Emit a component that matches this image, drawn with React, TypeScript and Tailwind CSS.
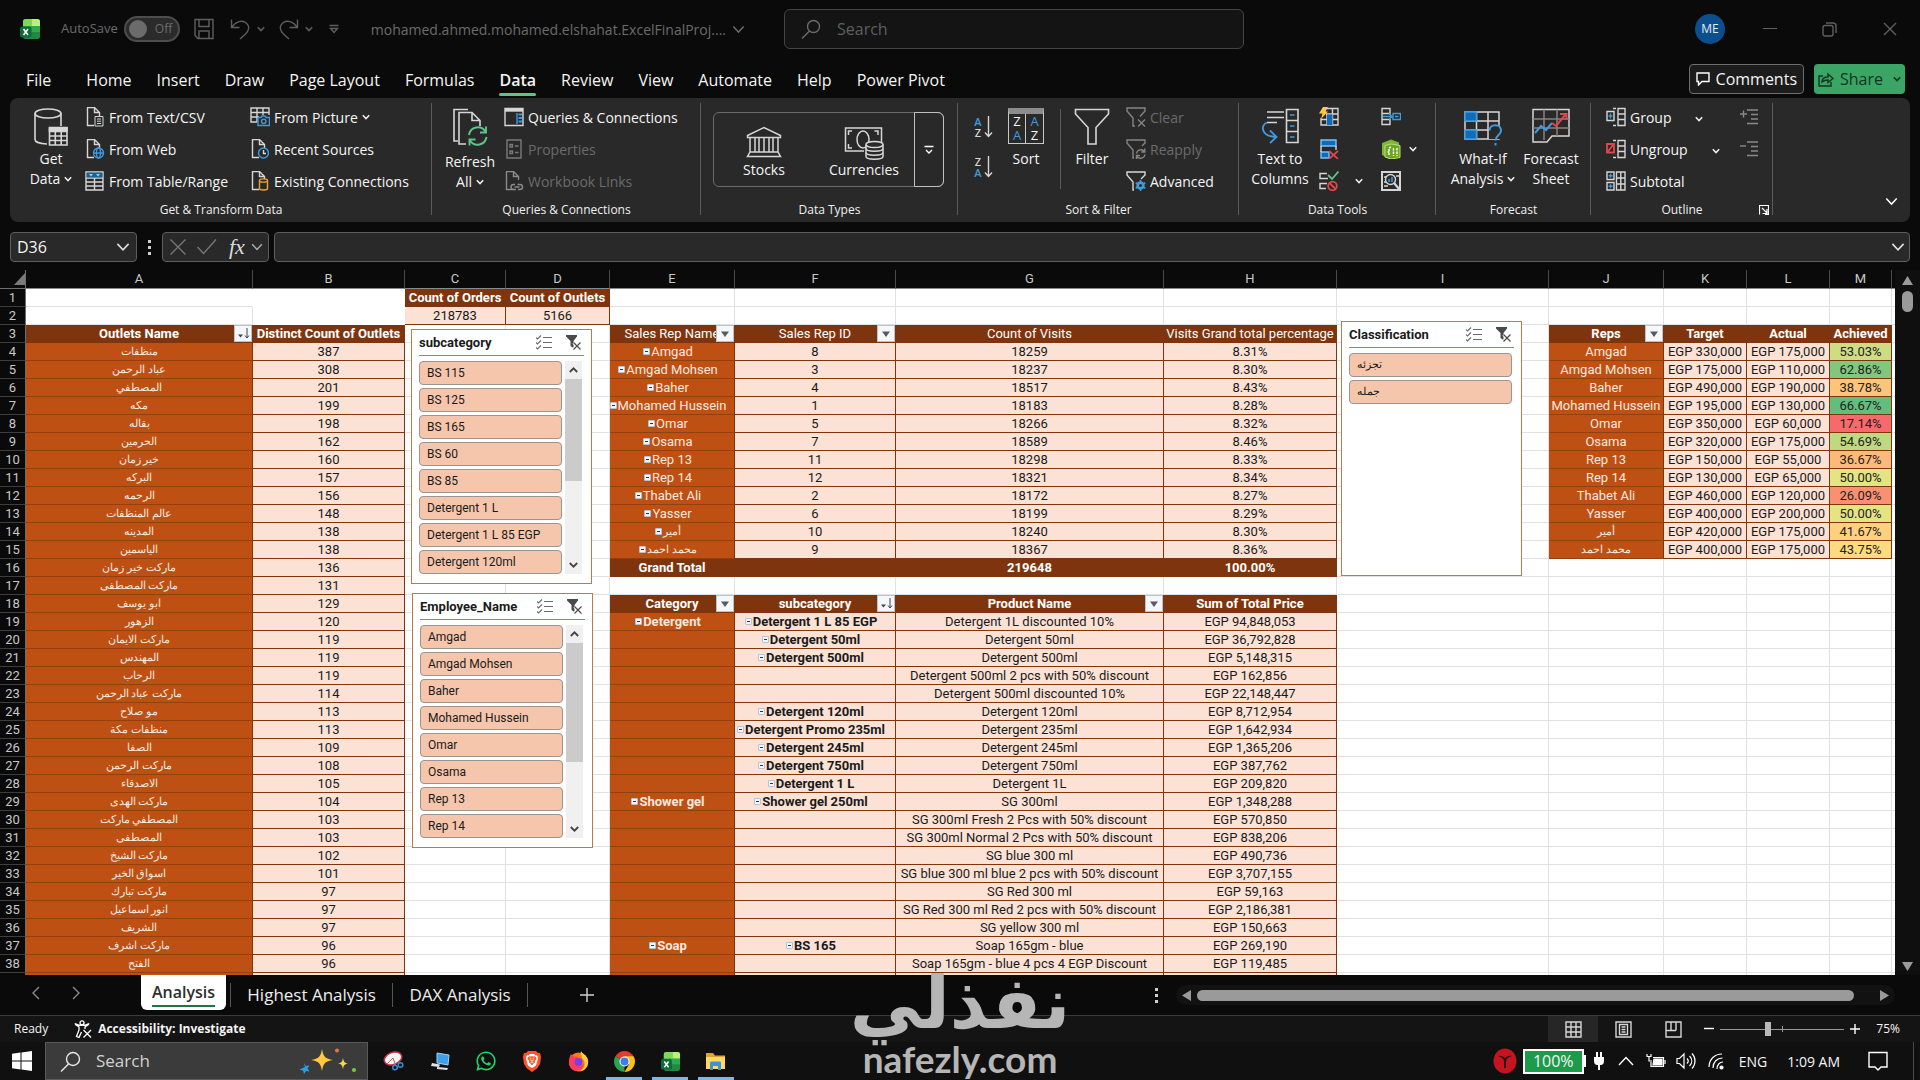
import { useState } from "react";
import type { ReactNode } from "react";
import { FaWhatsapp } from "react-icons/fa";
import { SiBrave } from "react-icons/si";

const LIGHT = "#d6d6d6";
const BLUE = "#3f9bdc";
const GREEN = "#5fc48a";

type IconProps = { w?: number; h?: number; box?: string; children: ReactNode; sw?: number; color?: string };

function Icon({ w = 20, h = 20, box, children, sw = 1.4, color = LIGHT }: IconProps) {
  return (
    <svg width={w} height={h} viewBox={box ?? `0 0 ${w} ${h}`} fill="none" stroke={color} strokeWidth={sw} className="shrink-0" aria-hidden="true">
      {children}
    </svg>
  );
}

function Caret({ size = 8, color = "#f0f0f0" }: { size?: number; color?: string }) {
  return (
    <svg width={size} height={size} viewBox="0 0 8 8" fill="none" stroke={color} strokeWidth={size > 8 ? 0.9 : 1.5} className="inline-block shrink-0" aria-hidden="true">
      <path d="M0.8 2.2 4 5.6 7.2 2.2" />
    </svg>
  );
}

/* ---------- Ribbon icons ---------- */

const docOutline = (color = LIGHT) => <path d="M9 18.5H2.5v-18h7l5 5V9M9.5.5v5h5" stroke={color} />;

const icons = {
  getData: (
    <Icon w={34} h={38} sw={1.6}>
      <ellipse cx="14" cy="5.5" rx="13" ry="4.5" />
      <path d="M1 5.5v26c0 2.400 5 4.200 12 4.500M27 5.500V18" />
      <path d="M15.500 19.500h17.500v17.500H15.500zM15.500 23.500H33M15.500 28H33M15.500 32.500H33M21.300 19.500V37M27.200 19.500V37" fill="#292929" />
      <path d="M15.500 20h17.500v3H15.500z" fill={LIGHT} />
    </Icon>
  ),
  textCsv: (
    <Icon>
      {docOutline()}
      <path d="M10 9.500h8v9.500h-8zM12 12h4M12 14.200h4M12 16.500h4" fill="#292929" strokeWidth={1} />
    </Icon>
  ),
  web: (
    <Icon>
      {docOutline()}
      <g stroke={BLUE}>
        <circle cx="13.500" cy="14" r="5" fill="#292929" />
        <ellipse cx="13.500" cy="14" rx="2" ry="5" />
        <path d="M8.500 14h10" />
      </g>
    </Icon>
  ),
  table: (
    <Icon>
      <path d="M1 1h17v18H1zM1 7h17M1 11h17M1 15h17M9.500 7v12" />
      <path d="M1.600 1.600h15.800v4.800H1.600z" fill="#1b5f93" stroke="none" />
      <path d="M4 3h4L6 5.500zM11 3h4l-2 2.500z" fill="#8fd0ff" stroke="none" />
    </Icon>
  ),
  picture: (
    <Icon>
      <path d="M7 15H1V1h18v7M1 5.500h18M1 10h8M7 1v14M13 1v7" />
      <path d="M8 10.500h3l1-1.500h3l1 1.500h3.500v8H8z" fill="#292929" stroke={BLUE} />
      <circle cx="13.700" cy="14.300" r="2.200" stroke={BLUE} />
    </Icon>
  ),
  recent: (
    <Icon>
      {docOutline()}
      <circle cx="13.500" cy="14" r="5" fill="#292929" stroke={BLUE} />
      <path d="M13.500 11v3.500H16" />
    </Icon>
  ),
  existing: (
    <Icon>
      {docOutline()}
      <g stroke="#e8a33d">
        <path d="M9.500 9.500v8c0 2 8 2 8 0v-8" fill="#292929" />
        <ellipse cx="13.500" cy="9.500" rx="4" ry="1.600" fill="#292929" />
      </g>
    </Icon>
  ),
  refresh: (
    <Icon w={36} h={38} sw={1.600}>
      <path d="M6 33H2V1.500h14M14 36H7V4.500h13l8 8V18M20 4.500v8h8" />
      <g stroke={GREEN} strokeWidth="1.900">
        <path d="M17 27a9 9 0 0 1 16.500-3.500M34 18.500v6h-6M34.500 29a9 9 0 0 1-16.500 3.500M17.500 37.500v-6h6" />
      </g>
    </Icon>
  ),
  queries: (
    <Icon>
      <path d="M1 1.500h18v17H1z" />
      <path d="M1 3.200h18" strokeWidth="3" />
      <path d="M13 6v11" stroke={BLUE} />
      <path d="M14.500 7.500h3.500M14.500 11h3.500M14.500 14.500h3.500" stroke={BLUE} strokeWidth="2" />
    </Icon>
  ),
  properties: (
    <Icon color="#7a7a7a">
      <path d="M3 1h14v18H3z" />
      <path d="M6 5.500h2.500V8H6zM6 12h2.500v2.500H6zM11 7h3.500M11 13.500h3.500" />
    </Icon>
  ),
  links: (
    <Icon color="#8a8a8a">
      {docOutline("#8a8a8a")}
      <path d="M11 13.500H9.500a2.500 2.500 0 0 0 0 5H12M14 18.500h2a2.500 2.500 0 0 0 0-5h-2.500M10.500 16h5" />
    </Icon>
  ),
  stocks: (
    <Icon w={36} h={32} sw={1.500}>
      <path d="M1.500 9.500 18 1.500l16.500 8v2h-33zM4 11.500V26M9 11.500V26M13 11.500V26M18 11.500V26M23 11.500V26M27 11.500V26M32 11.500V26M4 26h28l2.500 4.500h-33z" />
    </Icon>
  ),
  currencies: (
    <Icon w={40} h={34} sw={1.500}>
      <path d="M20 25H1.500V2h36v14" />
      <path d="M8 5H4.500v4M4.500 18v4H8M30.500 5H34v4" />
      <ellipse cx="19" cy="13.500" rx="6" ry="8.500" />
      <path d="M22 18.500v12c0 3.500 17 3.500 17 0v-12" fill="#292929" />
      <ellipse cx="30.500" cy="18.500" rx="8.500" ry="3" fill="#292929" />
      <path d="M22 22.500c0 3.500 17 3.500 17 0M22 26.500c0 3.500 17 3.500 17 0" />
    </Icon>
  ),
  filterBig: (
    <Icon w={36} h={38} sw={1.600}>
      <path d="M1.500 1.500h33V6L22 19.500V36h-8V19.500L1.500 6z" />
    </Icon>
  ),
  clear: (
    <Icon color="#858585">
      <path d="M9 19H7v-8L1 4V1h18v3l-5 5.500M12 12.500l7 7M19 12.500l-7 7" />
    </Icon>
  ),
  reapply: (
    <Icon color="#858585">
      <path d="M8 19H7v-8L1 4V1h18v3l-3 3M10.500 14.500a4.500 4.500 0 0 1 8-2M18.800 9.500v3.500h-3.500M19 15.500a4.500 4.500 0 0 1-8 2M10.500 20v-3.500H14" />
    </Icon>
  ),
  advanced: (
    <Icon>
      <path d="M8 19H7v-8L1 4V1h18v3l-4 4" />
      <circle cx="14.500" cy="14.500" r="3" stroke={BLUE} strokeWidth="2.400" />
      <path d="M14.500 9v11M9.700 11.700l9.600 5.600M19.300 11.700l-9.600 5.600" stroke={BLUE} strokeWidth="1.600" />
      <circle cx="14.500" cy="14.500" r="1.500" fill="#292929" stroke="none" />
    </Icon>
  ),
  textCols: (
    <Icon w={40} h={36} sw={1.600}>
      <path d="M7 4h17M7 9.500h17M7 14.500h10M26.500 1.500H38v33H26.500zM26.500 12.500H38M26.500 23.500H38" />
      <path d="M7 14.500c-6 2-7 13 8 14.500M10 22.500l6.500 6.500-6.500 6" stroke={BLUE} strokeWidth="1.800" />
      <path d="M30 7h4.500M30 18h4.500M30 29h4.500" stroke={BLUE} />
    </Icon>
  ),
  flash: (
    <Icon>
      <path d="M6 1.500h13V18H2v-7M7 7h12M2 12.500h17M8 7v11M13.500 1.500V18" />
      <path d="M8 7.500h5.500V18H8z" fill="#0f6cbd" stroke="none" />
      <path d="M4 0h5L6.500 4.500H9L2 12l1.500-5.500H0z" fill="#ffc83d" stroke="none" />
    </Icon>
  ),
  dupes: (
    <Icon>
      <path d="M2 1h15v6H2zM2 13h8v6H2z" fill="#0f6cbd" stroke="#7cc0f0" />
      <path d="M2 7v6M17 7v4" />
      <path d="m10 12 9 8M19 12l-9 8" stroke="#e0474c" strokeWidth="1.700" />
    </Icon>
  ),
  validation: (
    <Icon>
      <path d="M8 2.500H1v5h8M8 12.500H1v5h6" />
      <path d="m9 4 4 4 6.500-7.500" stroke={GREEN} strokeWidth="1.800" />
      <circle cx="13.500" cy="15" r="4.300" stroke="#e0474c" strokeWidth="1.800" />
      <path d="m10.500 12 6 6" stroke="#e0474c" strokeWidth="1.800" />
    </Icon>
  ),
  consolidate: (
    <Icon>
      <path d="M1 1.500h8v5H1zM1 12.500h8v5H1zM1 6.500v6" />
      <path d="M12 6.500h7.500v6H12zM2 9.500h8M8 6.500l3 3-3 3M14 9.500h3.500" stroke={BLUE} />
    </Icon>
  ),
  dataModel: (
    <Icon>
      <path d="M1 4 10 .5l8 3v14l-8 2.500-9-4z" fill="#7db72f" stroke="none" />
      <path d="M4 6.500 10 5l9 1.500v12L10 20l-6-2z" fill="#6ba525" stroke="#b9e07c" strokeWidth="1" />
      <path d="M8 16V9l2-1M12.500 9v8M16 9v8M6.500 13H8" stroke="#fff" strokeDasharray="2.500 1" />
    </Icon>
  ),
  manage: (
    <Icon>
      <path d="M1 1h18v18H1z" strokeWidth="2" />
      <path d="M3 6h3M3 11h2M3 15h4M15 5h3" />
      <circle cx="9.500" cy="8.500" r="5" fill="#292929" />
      <path d="m13 12 6 7" strokeWidth="2.200" />
      <path d="M8 11V8M11 11V6" stroke={BLUE} strokeWidth="1.600" />
    </Icon>
  ),
  whatIf: (
    <Icon w={38} h={38} sw={1.500}>
      <path d="M1 4h34v27H1zM1 13h34M1 22h34M12.500 4v27M24 4v27" />
      <path d="M1 4h11.500v9H1zM1 22h11.500v9H1z" fill="#0f6cbd" stroke="#3f9bdc" />
      <path d="M25 19h12v12H25z" fill="#292929" stroke="none" />
      <path d="M25.500 22.500c0-7 11.500-7 11.500 0 0 5-5.500 4.500-5.500 10M31.500 35v2.500" stroke={BLUE} strokeWidth="2" />
    </Icon>
  ),
  forecast: (
    <Icon w={38} h={36} sw={1.500}>
      <path d="M1 1.500h36V28H20l-5 6H1z" />
      <path d="M1 11h36M1 20h36M12 1.500V32M25 1.500V28" stroke="#8f8080" />
      <path d="m3 25 6-7 5 4 6-7" stroke={BLUE} strokeWidth="2" />
      <path d="m20 15 4 3L34 6M28 6h6.500v6" stroke="#e0474c" strokeWidth="2" />
    </Icon>
  ),
  group: (
    <Icon>
      <path d="M12 1.500h7v17h-7zM12 7h7M12 12.500h7M10 1.500H7M10 18.500H7" />
      <path d="M1 4.500h7v9H1z" />
      <path d="M4.500 6.500v5M2.500 9h4" stroke={BLUE} />
    </Icon>
  ),
  ungroup: (
    <Icon>
      <path d="M12 1.500h7v17h-7zM12 7h7M12 12.500h7M10 1.500H7M10 18.500H7" />
      <path d="M1 5h7v8.500H1zM1.500 13 7.500 5.500" stroke="#e0474c" strokeWidth="1.800" />
    </Icon>
  ),
  subtotal: (
    <Icon>
      <path d="M10.500 1h8.500v18h-8.500zM10.500 7H19M10.500 13H19M14.800 1v18M1 1h7v7.500H1zM1 11.500h7V19H1z" />
      <path d="M4.500 2.800v4M2.600 4.800h4M4.500 13.300v4M2.600 15.300h4" stroke={BLUE} />
    </Icon>
  ),
};

function SortIcon({ first, second, topBlue }: { first: string; second: string; topBlue: boolean }) {
  return (
    <span className="flex h-6 w-5 items-center gap-px">
      <span className="flex w-2.5 flex-col text-[11px] leading-[11px] font-semibold">
        <span className={topBlue ? "text-[#3f9bdc]" : "text-[#d6d6d6]"}>{first}</span>
        <span className={topBlue ? "text-[#d6d6d6]" : "text-[#3f9bdc]"}>{second}</span>
      </span>
      <Icon w={9} h={22}>
        <path d="M4.500 0v20M1 16.500l3.500 4 3.500-4" />
      </Icon>
    </span>
  );
}

function SortBig() {
  return (
    <span className="grid h-9 w-9 grid-cols-2 border border-[#c8c8c8] border-t-[6px] border-t-[#8c8c8c] text-[13px] leading-[14px]">
      <span className="flex flex-col items-center border-r border-[#c8c8c8]">
        <span>Z</span>
        <span className="text-[#3f9bdc]">A</span>
      </span>
      <span className="flex flex-col items-center">
        <span className="text-[#3f9bdc]">A</span>
        <span>Z</span>
      </span>
    </span>
  );
}

function LevelIcon({ plus }: { plus: boolean }) {
  return (
    <Icon w={20} h={18} color="#8a8a8a">
      <path d={plus ? "M1 6h7M4.500 2.500v7" : "M1 6h6"} />
      <path d="M8 2h11M12 6.500h7M12 11h7M8 15.500h11" />
    </Icon>
  );
}

/* ---------- Ribbon ---------- */

function RibbonGroup({ label, width, children }: { label: string; width: string; children: ReactNode }) {
  return (
    <section aria-label={label} className={`relative flex shrink-0 flex-col pt-[3px] ${width}`}>
      <div className="flex h-[98px]">{children}</div>
      <div className="flex h-[22px] items-center justify-center text-[12px] text-[#f0f0f0]">{label}</div>
      <span className="absolute top-[5px] right-0 bottom-[7px] w-px bg-[#5a5a5a]" />
    </section>
  );
}

function BigButton({ icon, lines, caret, width, gap = "gap-[3px]" }: { icon: ReactNode; lines: string[]; caret?: boolean; width: string; gap?: string }) {
  return (
    <button className={`flex shrink-0 flex-col items-center pt-[7px] ${width} ${gap}`}>
      <span className="flex h-[38px] items-start">{icon}</span>
      <span className="text-[14px] leading-5 whitespace-nowrap">
        {lines.map((line, i) => (
          <span key={line} className="block">
            {line}
            {caret && i === lines.length - 1 && (
              <span className="ml-1 inline-flex pb-0.5 align-middle">
                <Caret />
              </span>
            )}
          </span>
        ))}
      </span>
    </button>
  );
}

function RowButton({ icon, label, disabled, caret }: { icon: ReactNode; label: string; disabled?: boolean; caret?: boolean }) {
  return (
    <button disabled={disabled} className={`flex h-8 items-center gap-1 text-[14px] whitespace-nowrap ${disabled ? "text-[#6b6b6b]" : ""}`}>
      {icon}
      {label}
      {caret && <Caret />}
    </button>
  );
}

function IconButton({ icon, label, caret, gap = "gap-2" }: { icon: ReactNode; label: string; caret?: boolean; gap?: string }) {
  return (
    <button aria-label={label} className={`flex h-8 items-center ${gap}`}>
      {icon}
      {caret && <Caret />}
    </button>
  );
}

function Ribbon() {
  return (
    <div className="mx-2.5 flex h-[124px] rounded-lg bg-[#292929]">
      <RibbonGroup label="Get & Transform Data" width="w-[422px]">
        <BigButton icon={icons.getData} lines={["Get", "Data"]} caret width="w-[62px] ml-[10px]" />
        <div className="ml-[3px] w-[165px]">
          <RowButton icon={icons.textCsv} label="From Text/CSV" />
          <RowButton icon={icons.web} label="From Web" />
          <RowButton icon={icons.table} label="From Table/Range" />
        </div>
        <div>
          <RowButton icon={icons.picture} label="From Picture" caret />
          <RowButton icon={icons.recent} label="Recent Sources" />
          <RowButton icon={icons.existing} label="Existing Connections" />
        </div>
      </RibbonGroup>
      <RibbonGroup label="Queries & Connections" width="w-[269px]">
        <BigButton icon={icons.refresh} lines={["Refresh", "All"]} caret width="w-[62px] ml-[7px]" gap="gap-1.5" />
        <div className="ml-[3px]">
          <RowButton icon={icons.queries} label="Queries & Connections" />
          <RowButton icon={icons.properties} label="Properties" disabled />
          <RowButton icon={icons.links} label="Workbook Links" disabled />
        </div>
      </RibbonGroup>
      <RibbonGroup label="Data Types" width="w-[257px]">
        <div className="mt-[11px] ml-3 flex h-[75px] w-[231px] rounded-md border border-[#6a6a6a] text-[14px] leading-5">
          <button className="flex w-[100px] flex-col items-center justify-end pb-1.5">
            {icons.stocks}
            <span className="mt-0.5">Stocks</span>
          </button>
          <button className="flex w-[100px] flex-col items-center justify-end pb-1.5">
            {icons.currencies}
            Currencies
          </button>
          <button aria-label="More data types" className="-my-px -mr-px flex flex-1 items-center justify-center rounded-r-md border border-[#c0c0c0]">
            <Icon w={10} h={10} color="#fff">
              <path d="M.5 1.500h9M2 5l3 3 3-3" />
            </Icon>
          </button>
        </div>
      </RibbonGroup>
      <RibbonGroup label="Sort & Filter" width="w-[281px]">
        <div className="ml-[15px] flex w-5 flex-col gap-4 pt-3.5">
          <button aria-label="Sort A to Z">
            <SortIcon first="A" second="Z" topBlue />
          </button>
          <button aria-label="Sort Z to A">
            <SortIcon first="Z" second="A" topBlue={false} />
          </button>
        </div>
        <BigButton icon={<SortBig />} lines={["Sort"]} width="w-12 ml-[9px]" />
        <span className="mt-2 ml-2.5 h-20 w-px bg-[#5a5a5a]" />
        <BigButton icon={icons.filterBig} lines={["Filter"]} width="w-12 ml-[7px]" />
        <div className="ml-2.5">
          <RowButton icon={icons.clear} label="Clear" disabled />
          <RowButton icon={icons.reapply} label="Reapply" disabled />
          <RowButton icon={icons.advanced} label="Advanced" />
        </div>
      </RibbonGroup>
      <RibbonGroup label="Data Tools" width="w-[197px]">
        <BigButton icon={icons.textCols} lines={["Text to", "Columns"]} width="w-[70px] ml-1.5" />
        <div className="ml-1 w-[62px]">
          <IconButton icon={icons.flash} label="Flash Fill" />
          <IconButton icon={icons.dupes} label="Remove Duplicates" />
          <IconButton icon={icons.validation} label="Data Validation" caret gap="gap-4" />
        </div>
        <div>
          <IconButton icon={icons.consolidate} label="Consolidate" />
          <IconButton icon={icons.dataModel} label="Data Model" caret />
          <IconButton icon={icons.manage} label="Manage Data Model" />
        </div>
      </RibbonGroup>
      <RibbonGroup label="Forecast" width="w-[155px]">
        <BigButton icon={icons.whatIf} lines={["What-If", "Analysis"]} caret width="w-[74px] ml-2.5" />
        <BigButton icon={icons.forecast} lines={["Forecast", "Sheet"]} width="w-[62px]" />
      </RibbonGroup>
      <RibbonGroup label="Outline" width="w-[182px]">
        <div className="ml-[15px] flex-1">
          <div className="flex">
            <RowButton icon={icons.group} label="Group" />
            <button aria-label="Group options" className="ml-6">
              <Caret />
            </button>
          </div>
          <div className="flex">
            <RowButton icon={icons.ungroup} label="Ungroup" />
            <button aria-label="Ungroup options" className="ml-6">
              <Caret />
            </button>
          </div>
          <RowButton icon={icons.subtotal} label="Subtotal" />
        </div>
        <div className="mr-3.5">
          <IconButton icon={<LevelIcon plus />} label="Show Detail" />
          <IconButton icon={<LevelIcon plus={false} />} label="Hide Detail" />
        </div>
        <button aria-label="Outline settings" className="absolute right-1 bottom-[7px]">
          <Icon w={10} h={10} color="#fff" sw={1.200}>
            <path d="M.5 9.500V.500h9v9H6M3 3l5 5M8 4v4.500H3.500" />
          </Icon>
        </button>
      </RibbonGroup>
      <div className="flex flex-1 items-end justify-end pr-3 pb-2.5">
        <button aria-label="Collapse ribbon">
          <Caret size={13} color="#fff" />
        </button>
      </div>
    </div>
  );
}

/* ---------- Title bar ---------- */

function ExcelLogo({ size = 22 }: { size?: number }) {
  return (
    <svg width={size} height={size} viewBox="0 0 22 22" aria-hidden="true">
      <rect x="4" y="1" width="17" height="20" rx="2.500" fill="#1d8a44" />
      <path d="M6.500 1H13v7H4V3.500A2.500 2.500 0 0 1 6.500 1z" fill="#7fd957" />
      <path d="M13 1h5.500A2.500 2.500 0 0 1 21 3.500V8h-8z" fill="#b8f07c" />
      <path d="M4 8h17v6H4z" fill="#2fa84f" />
      <rect x="1" y="8.500" width="11.500" height="11" rx="2" fill="#0f6b3a" />
      <path d="m4.500 11 4.500 6M9 11l-4.500 6" stroke="#fff" strokeWidth="1.600" />
    </svg>
  );
}

function TitleBar() {
  const dim = "#5f5f5f";
  return (
    <header className="flex h-[58px] items-center pl-[19px] text-[#6b6b6b]">
      <ExcelLogo />
      <label className="ml-5 flex items-center gap-1.5 text-[13px]">
        AutoSave
        <input type="checkbox" role="switch" className="peer sr-only" />
        <span className="flex h-[26px] w-14 items-center gap-2 rounded-full border-2 border-[#4d4d4d] bg-[#2b2b2b] pl-[3px] text-[12px]">
          <span className="size-[18px] rounded-full bg-[#6b6b6b]" />
          Off
        </span>
      </label>
      <button aria-label="Save" className="ml-3.5">
        <Icon w={20} h={22} color={dim}>
          <path d="M1 1.500h18v19H4l-3-3zM5 1.500v7h10v-7M5 20.500V13h10v7.500" />
        </Icon>
      </button>
      <button aria-label="Undo" className="ml-4 flex items-center gap-1.5">
        <Icon w={21} h={22} color={dim}>
          <path d="M1.500 1.500v8h8M1.500 9.500C6 3 12 2 15.500 4.500c5 3.500 3.500 8.500-.5 12L10 21" />
        </Icon>
        <Caret color={dim} />
      </button>
      <button aria-label="Redo" className="ml-3.5 flex items-center gap-1.5">
        <Icon w={20} h={22} color={dim}>
          <path d="M18.500 1.500v8h-8M18.500 9.500C14 3 8 2 4.500 4.500c-5 3.500-3.500 8.500.5 12L10 21" />
        </Icon>
        <Caret color={dim} />
      </button>
      <button aria-label="Customize toolbar" className="ml-4">
        <Icon w={10} h={10} color={dim}>
          <path d="M.5 1.500h9M1.500 4.500h7L5 8.500z" />
        </Icon>
      </button>
      <button className="ml-8 flex items-center gap-1.5 text-[14px]">
        mohamed.ahmed.mohamed.elshahat.ExcelFinalProj....
        <Caret size={13} color="#6b6b6b" />
      </button>
      <label className="ml-[39px] flex h-10 w-[460px] items-center rounded-md border border-[#444] bg-[#141414] pl-4">
        <Icon w={20} h={20} color="#6b6b6b">
          <circle cx="12.500" cy="7.500" r="6" />
          <path d="M8.500 12 1 19.500" />
        </Icon>
        <input type="search" aria-label="Search" placeholder="Search" className="ml-4 min-w-0 flex-1 bg-transparent text-[16px] outline-none placeholder:text-[#5f5f5f]" />
      </label>
      <div className="ml-auto flex items-center">
        <button className="flex size-[30px] items-center justify-center rounded-full bg-[#0b4f8f] text-[12px] text-[#e8e8e8]">ME</button>
        <button aria-label="Minimize" className="ml-[38px]">
          <Icon w={14} h={14} color={dim} sw={1}>
            <path d="M0 6.500h14" />
          </Icon>
        </button>
        <button aria-label="Restore" className="ml-[45px]">
          <Icon w={16} h={15} color={dim}>
            <rect x="1" y="3.500" width="10" height="10.500" rx="2" />
            <path d="M4 1h7c2 0 3 1 3 3v7" />
          </Icon>
        </button>
        <button aria-label="Close" className="mr-[23px] ml-[45px]">
          <Icon w={14} h={14} color={dim}>
            <path d="m1 1 12 12M13 1 1 13" />
          </Icon>
        </button>
      </div>
    </header>
  );
}

const menuTabs = ["File", "Home", "Insert", "Draw", "Page Layout", "Formulas", "Data", "Review", "View", "Automate", "Help", "Power Pivot"];

function MenuBar() {
  return (
    <nav className="flex h-10 items-center gap-px pr-[15px] pl-3.5 text-[16px]">
      {menuTabs.map((tab) => (
        <button key={tab} className={`relative px-3 pt-1 whitespace-nowrap ${tab === "File" ? "mr-2.5" : ""} ${tab === "Data" ? "font-semibold" : ""}`}>
          {tab}
          {tab === "Data" && <span className="absolute inset-x-3 -bottom-1 h-[3px] rounded bg-[#5fc48a]" />}
        </button>
      ))}
      <div className="ml-auto flex gap-2.5 pt-0.5">
        <button className="flex h-[30px] items-center gap-1.5 rounded border border-[#6e6e6e] bg-[#1c1c1c] px-1.5 text-[16px]">
          <Icon w={14} h={14} color="#fff">
            <path d="M1 1h12v8.500H6l-3.500 3.500V9.500H1z" />
          </Icon>
          Comments
        </button>
        <button className="flex h-[30px] items-center gap-1.5 rounded bg-[#3aa564] px-1 text-[16px] text-[#10351f]">
          <Icon w={16} h={15} color="#10351f">
            <path d="M5 4H1v10h12v-4M4 10c0-4 3-5 6-5V2l5 4.500-5 4V8C7 8 5.500 8.500 4 10z" />
          </Icon>
          Share
          <span className="ml-1 flex">
            <Caret color="#10351f" />
          </span>
        </button>
      </div>
    </nav>
  );
}

function FormulaBar() {
  return (
    <div className="flex h-12 items-start px-2.5 pt-2.5">
      <div className="flex h-[30px] w-[127px] items-center rounded border border-[#5c5c5c] bg-[#292929] pr-1.5 pl-1.5">
        <input aria-label="Name box" defaultValue="D36" className="min-w-0 flex-1 bg-transparent text-[16px] outline-none" />
        <Caret size={14} color="#e0e0e0" />
      </div>
      <span className="mx-[11px] flex h-[30px] w-[3px] flex-col justify-center gap-[3px]">
        <span className="size-[3px] bg-[#d0d0d0]" />
        <span className="size-[3px] bg-[#d0d0d0]" />
        <span className="size-[3px] bg-[#d0d0d0]" />
      </span>
      <div className="flex h-[30px] w-[107px] items-center rounded border border-[#5c5c5c] bg-[#292929] pl-1.5">
        <button aria-label="Cancel">
          <Icon w={18} h={18} color="#777">
            <path d="m1.500 1.500 15 15M16.500 1.500l-15 15" />
          </Icon>
        </button>
        <button aria-label="Enter" className="ml-2.5">
          <Icon w={20} h={18} color="#777">
            <path d="m.500 9 6 6.500L19 1.500" />
          </Icon>
        </button>
        <button className="ml-3 font-['Liberation_Serif',serif] text-[22px] leading-6 text-[#dcdcdc] italic">fx</button>
        <span className="ml-1.5 flex">
          <Caret size={12} color="#b0b0b0" />
        </span>
      </div>
      <div className="ml-[5px] flex h-[30px] flex-1 items-center rounded border border-[#5c5c5c] bg-[#292929] pr-1">
        <input aria-label="Formula" className="min-w-0 flex-1 bg-transparent px-2 outline-none" />
        <Caret size={14} color="#e0e0e0" />
      </div>
    </div>
  );
}

/* ---------- Sheet data ---------- */

const outlets: [string, number][] = [
  ["منظفات", 387], ["عباد الرحمن", 308], ["المصطفي", 201], ["مكه", 199], ["بقاله", 198], ["الحرمين", 162],
  ["خير زمان", 160], ["البركه", 157], ["الرحمه", 156], ["عالم المنظفات", 148], ["المدينه", 138], ["الياسمين", 138],
  ["ماركت خير زمان", 136], ["ماركت المصطفى", 131], ["ابو يوسف", 129], ["الزهور", 120], ["ماركت الايمان", 119],
  ["المهندس", 119], ["الرحاب", 119], ["ماركت عباد الرحمن", 114], ["مو صلاح", 113], ["منظفات مكة", 113],
  ["الصفا", 109], ["ماركت الرحمن", 108], ["الاصدقاء", 105], ["ماركت الهدى", 104], ["المصطفي ماركت", 103],
  ["المصطفى", 103], ["ماركت الشيخ", 102], ["اسواق الخير", 101], ["ماركت تبارك", 97], ["انور اسماعيل", 97],
  ["الشريف", 97], ["ماركت اشرف", 96], ["الفتح", 96],
];

const visits: [string, number, number, string][] = [
  ["Amgad", 8, 18259, "8.31%"], ["Amgad Mohsen", 3, 18237, "8.30%"], ["Baher", 4, 18517, "8.43%"],
  ["Mohamed Hussein", 1, 18183, "8.28%"], ["Omar", 5, 18266, "8.32%"], ["Osama", 7, 18589, "8.46%"],
  ["Rep 13", 11, 18298, "8.33%"], ["Rep 14", 12, 18321, "8.34%"], ["Thabet Ali", 2, 18172, "8.27%"],
  ["Yasser", 6, 18199, "8.29%"], ["أمير", 10, 18240, "8.30%"], ["محمد احمد", 9, 18367, "8.36%"],
];

const products: [string, string, string, string][] = [
  ["Detergent", "Detergent 1 L 85 EGP", "Detergent 1L discounted 10%", "94,848,053"],
  ["", "Detergent 50ml", "Detergent 50ml", "36,792,828"],
  ["", "Detergent 500ml", "Detergent 500ml", "5,148,315"],
  ["", "", "Detergent 500ml 2 pcs with 50% discount", "162,856"],
  ["", "", "Detergent 500ml discounted 10%", "22,148,447"],
  ["", "Detergent 120ml", "Detergent 120ml", "8,712,954"],
  ["", "Detergent Promo 235ml", "Detergent 235ml", "1,642,934"],
  ["", "Detergent 245ml", "Detergent 245ml", "1,365,206"],
  ["", "Detergent 750ml", "Detergent 750ml", "387,762"],
  ["", "Detergent 1 L", "Detergent 1L", "209,820"],
  ["Shower gel", "Shower gel 250ml", "SG 300ml", "1,348,288"],
  ["", "", "SG 300ml Fresh 2 Pcs with 50% discount", "570,850"],
  ["", "", "SG 300ml Normal 2 Pcs with 50% discount", "838,206"],
  ["", "", "SG blue 300 ml", "490,736"],
  ["", "", "SG blue 300 ml blue 2 pcs with 50% discount", "3,707,155"],
  ["", "", "SG Red 300 ml", "59,163"],
  ["", "", "SG Red 300 ml Red 2 pcs with 50% discount", "2,186,381"],
  ["", "", "SG yellow 300 ml", "150,663"],
  ["Soap", "BS 165", "Soap 165gm - blue", "269,190"],
  ["", "", "Soap 165gm - blue 4 pcs 4 EGP Discount", "119,485"],
];

const targets: [string, string, string, string, string][] = [
  ["Amgad", "330,000", "175,000", "53.03%", "bg-[#cfdd82]"],
  ["Amgad Mohsen", "175,000", "110,000", "62.86%", "bg-[#83c77d]"],
  ["Baher", "490,000", "190,000", "38.78%", "bg-[#fdc47c]"],
  ["Mohamed Hussein", "195,000", "130,000", "66.67%", "bg-[#63be7b]"],
  ["Omar", "350,000", "60,000", "17.14%", "bg-[#f8696b]"],
  ["Osama", "320,000", "175,000", "54.69%", "bg-[#c0d981]"],
  ["Rep 13", "150,000", "55,000", "36.67%", "bg-[#fcba7a]"],
  ["Rep 14", "130,000", "65,000", "50.00%", "bg-[#e5e483]"],
  ["Thabet Ali", "460,000", "120,000", "26.09%", "bg-[#fa9072]"],
  ["Yasser", "400,000", "200,000", "50.00%", "bg-[#e5e483]"],
  ["أمير", "420,000", "175,000", "41.67%", "bg-[#fed17f]"],
  ["محمد احمد", "400,000", "175,000", "43.75%", "bg-[#fedb81]"],
];

const HEAD = "bg-[#7e350e] border-[#7e350e] text-white";
const HEAD_BOLD = `${HEAD} font-bold`;
const ORANGE = "bg-[#be5014] border-r-[#7e350e] border-b-[#92400f] text-[#fbe9df]";
const PEACH = "bg-[#fbe2d5] border-[#7e350e] text-[#1a1a1a]";
const BLANK = "bg-white border-[#e1e1e1]";

type Cell = { text?: string; cls: string; filter?: "drop" | "sort"; toggle?: boolean };
const COLS = ["A", "B", "C", "D", "E", "F", "G", "H", "I", "J", "K", "L", "M"];

function cellAt(row: number, col: string): Cell {
  if (col === "A" || col === "B") {
    if (row <= 2) return { cls: col === "A" && row === 2 ? BLANK : col === "A" ? "bg-white border-r-white border-b-[#e1e1e1]" : "bg-white border-white" };
    if (row === 3) return col === "A" ? { text: "Outlets Name", cls: HEAD_BOLD, filter: "sort" } : { text: "Distinct Count of Outlets", cls: HEAD_BOLD };
    const entry = outlets[row - 4];
    return col === "A" ? { text: entry?.[0], cls: ORANGE } : { text: entry && String(entry[1]), cls: PEACH };
  }
  if (col === "C" || col === "D") {
    if (row === 1) return { text: col === "C" ? "Count of Orders" : "Count of Outlets", cls: HEAD_BOLD };
    if (row === 2) return { text: col === "C" ? "218783" : "5166", cls: PEACH };
    return { cls: BLANK };
  }
  const pivot = ["E", "F", "G", "H"].indexOf(col);
  if (pivot >= 0) {
    if (row === 3) return { text: ["Sales Rep Name", "Sales Rep ID", "Count of Visits", "Visits Grand total percentage"][pivot], cls: HEAD, filter: pivot < 2 ? "drop" : undefined };
    if (row >= 4 && row <= 15) return { text: String(visits[row - 4][pivot]), cls: pivot === 0 ? ORANGE : PEACH, toggle: pivot === 0 };
    if (row === 16) return { text: ["Grand Total", "", "219648", "100.00%"][pivot], cls: HEAD_BOLD };
    if (row === 18) {
      const filters = ["drop", "sort", "drop", undefined] as const;
      return { text: ["Category", "subcategory", "Product Name", "Sum of Total Price"][pivot], cls: HEAD_BOLD, filter: filters[pivot] };
    }
    if (row >= 19) {
      const value = products[row - 19]?.[pivot];
      if (pivot === 0) return { text: value, cls: `${ORANGE} font-bold`, toggle: !!value };
      return { text: pivot === 3 && value ? `EGP ${value}` : value, cls: pivot === 1 ? `${PEACH} font-bold` : PEACH, toggle: pivot === 1 && !!value };
    }
    return { cls: BLANK };
  }
  const rep = ["J", "K", "L", "M"].indexOf(col);
  if (rep >= 0 && row === 3) return { text: ["Reps", "Target", "Actual", "Achieved"][rep], cls: HEAD_BOLD, filter: rep === 0 ? "drop" : undefined };
  if (rep >= 0 && row >= 4 && row <= 15) {
    const entry = targets[row - 4];
    if (rep === 0) return { text: entry[0], cls: ORANGE };
    if (rep === 3) return { text: entry[3], cls: `${entry[4]} border-[#7e350e] text-[#222]` };
    return { text: `EGP ${entry[rep]}`, cls: PEACH };
  }
  return { cls: BLANK };
}

function FilterButton({ kind }: { kind: "drop" | "sort" }) {
  return (
    <button aria-label="Filter" className="absolute top-0 right-0 flex h-[17px] w-[18px] items-center justify-center border border-[#b9c3cf] bg-[#f4f7fb]">
      {kind === "drop" ? (
        <svg width="8" height="6" viewBox="0 0 8 6" fill="#5a5a5a">
          <path d="M0 .5h8L4 6z" />
        </svg>
      ) : (
        <svg width="13" height="11" viewBox="0 0 13 11" fill="none" stroke="#444">
          <path d="M10 0v10M8 7.500l2 2.500 2-2.500" />
          <path d="M1 6.500h5L3.500 9.500z" fill="#444" stroke="none" />
        </svg>
      )}
    </button>
  );
}

const isArabic = (text?: string) => !!text && /[\u0600-\u06ff]/.test(text);

function SheetCell({ cell }: { cell: Cell }) {
  return (
    <td className={`relative h-[18px] overflow-hidden border-r border-b p-0 leading-[17px] whitespace-nowrap ${cell.cls}`}>
      {cell.text && (
        <div className="flex h-[17px] items-center justify-center">
          <span dir="auto" className={`relative ${isArabic(cell.text) ? "text-[11px]" : ""}`}>
            {cell.toggle && (
              <button aria-label={`Collapse ${cell.text}`} className="absolute top-[5px] right-full mr-px flex h-[7px] w-[7px] items-center justify-center rounded-[1px] border border-[#b5c3d6] bg-[#f2f6fc]">
                <span className="h-px w-[3px] bg-[#333]" />
              </button>
            )}
            {cell.text}
          </span>
        </div>
      )}
      {cell.filter && <FilterButton kind={cell.filter} />}
    </td>
  );
}

const rowNumbers = Array.from({ length: 39 }, (_, i) => i + 1);

function SheetTable() {
  return (
    <table className="w-full table-fixed border-separate border-spacing-0 font-['Roboto',sans-serif] text-[13px]">
      <colgroup>
        <col className="w-[26px]" />
        <col className="w-[227px]" />
        <col className="w-[152px]" />
        <col className="w-[101px]" />
        <col className="w-[104px]" />
        <col className="w-[125px]" />
        <col className="w-[161px]" />
        <col className="w-[268px]" />
        <col className="w-[173px]" />
        <col className="w-[212px]" />
        <col className="w-[115px]" />
        <col className="w-[83px]" />
        <col className="w-[83px]" />
        <col className="w-[62px]" />
        <col />
      </colgroup>
      <thead>
        <tr className="bg-[#0a0a0a] text-[#c8c8c8]">
          <th className="h-[19px] border-r border-b border-[#6e6e6e] p-0">
            <svg width="11" height="12" viewBox="0 0 11 12" fill="#7a7a7a" className="ml-auto">
              <path d="M11 0v12H0z" />
            </svg>
          </th>
          {COLS.map((c) => (
            <th key={c} className="border-r border-b border-r-[#4a4a4a] border-b-[#8a8a8a] p-0 leading-[18px] font-normal">
              {c}
            </th>
          ))}
          <th className="border-b border-b-[#8a8a8a] p-0" />
        </tr>
      </thead>
      <tbody>
        {rowNumbers.map((row) => (
          <tr key={row}>
            <th className="h-[18px] border-r border-b border-r-[#6e6e6e] border-b-[#3d3d3d] bg-[#0a0a0a] p-0 leading-[17px] font-normal text-[#c8c8c8]">{row < 39 ? row : ""}</th>
            {COLS.map((col) => (
              <SheetCell key={col} cell={cellAt(row, col)} />
            ))}
            <td className="border-b border-[#e1e1e1] bg-white p-0" />
          </tr>
        ))}
      </tbody>
    </table>
  );
}

/* ---------- Slicers ---------- */

function Slicer({ title, items, place, thumb }: { title: string; items: string[]; place: string; thumb?: string }) {
  return (
    <section aria-label={title} className={`absolute h-[255px] w-[181px] border border-[#c07a4a] bg-white px-[7px] font-['Roboto',sans-serif] text-[#1a1a1a] ${place}`}>
      <div className="flex h-[26px] items-center border-b border-[#c07a4a] pr-[3px] text-[13px] font-bold">
        {title}
        <button aria-label="Multi-select" className="ml-auto">
          <Icon w={16} h={15} color="#6a6a6a" sw={1.100}>
            <path d="m0 2.500 1.500 1.500L5 .500M0 7.500 1.500 9 5 5.500M0 12.500 1.500 14 5 10.500M7 2.500h9M7 7.500h9M7 12.500h9" />
          </Icon>
        </button>
        <button aria-label="Clear filter" className="ml-3.5">
          <Icon w={15} h={15} color="#4a4a4a" sw={1.200}>
            <path d="M0 0h11v1.500L7.500 6v7l-3-2V6L0 1.500z" fill="#4a4a4a" stroke="none" />
            <path d="m7.500 7.500 7 7M14.500 7.500l-7 7" stroke="#fff" strokeWidth="3" />
            <path d="m7.500 7.500 7 7M14.500 7.500l-7 7" />
          </Icon>
        </button>
      </div>
      <div className="mt-[5px] flex gap-[3px] pr-0.5">
        <div className="flex min-w-0 flex-1 flex-col gap-[3px]">
          {items.map((item) => (
            <button key={item} className={`h-6 rounded border border-[#9b9490] bg-[#f6c6ac] pl-[7px] text-left ${isArabic(item) ? "text-[11px]" : "text-[12px]"}`}>
              {item}
            </button>
          ))}
        </div>
        {thumb && (
          <div className="flex w-[17px] flex-col items-center bg-[#f0f0f0]">
            <span className="flex h-[18px] items-center">
              <svg width="9" height="6" viewBox="0 0 9 6" fill="none" stroke="#444" strokeWidth="1.800"><path d="M.8 5 4.500 1.300 8.200 5" /></svg>
            </span>
            <span className={`w-full bg-[#cbcbcb] ${thumb}`} />
            <span className="mt-auto flex h-[18px] items-center">
              <svg width="9" height="6" viewBox="0 0 9 6" fill="none" stroke="#444" strokeWidth="1.800"><path d="M.8 1 4.500 4.700 8.200 1" /></svg>
            </span>
          </div>
        )}
      </div>
    </section>
  );
}

function Sheet() {
  return (
    <main className="flex min-h-0 flex-1 overflow-hidden">
      <div className="relative min-w-0 flex-1 overflow-hidden">
        <SheetTable />
        <Slicer title="subcategory" place="top-[59px] left-[411px]" thumb="h-[102px]" items={["BS 115", "BS 125", "BS 165", "BS 60", "BS 85", "Detergent 1 L", "Detergent 1 L 85 EGP", "Detergent 120ml"]} />
        <Slicer title="Employee_Name" place="top-[323px] left-[412px]" thumb="h-[119px]" items={["Amgad", "Amgad Mohsen", "Baher", "Mohamed Hussein", "Omar", "Osama", "Rep 13", "Rep 14"]} />
        <Slicer title="Classification" place="top-[51px] left-[1341px]" items={["تجزئه", "جمله"]} />
      </div>
      <div className="flex w-[25px] flex-col items-center bg-[#0f0f0f] pt-1.5 pb-1">
        <svg width="11" height="9" viewBox="0 0 11 9" fill="#9a9a9a"><path d="M5.500 0 11 9H0z" /></svg>
        <span className="mt-1.5 h-[21px] w-[11px] rounded-full bg-[#9a9a9a]" />
        <svg width="11" height="9" viewBox="0 0 11 9" fill="#9a9a9a" className="mt-auto"><path d="M5.500 9 11 0H0z" /></svg>
      </div>
    </main>
  );
}

/* ---------- Bottom bars ---------- */

function SheetTabs() {
  return (
    <div className="flex h-[41px] shrink-0 items-start border-b border-[#3a3a3a] pr-[25px]">
      <div className="flex h-9 w-[141px] items-center gap-8 pl-8">
        <button aria-label="Previous sheet">
          <Icon w={8} h={14} color="#8a8a8a"><path d="M7 1 1 7l6 6" /></Icon>
        </button>
        <button aria-label="Next sheet">
          <Icon w={8} h={14} color="#8a8a8a"><path d="m1 1 6 6-6 6" /></Icon>
        </button>
      </div>
      <button className="h-[35px] rounded-b-md bg-white px-[11px] text-[16px] font-semibold text-[#2e2e2e]">
        <span className="block border-b-2 border-[#217346] leading-[26px]">Analysis</span>
      </button>
      <div className="flex h-10 items-center text-[17px] text-[#ededed]">
        <span className="ml-1 h-6 w-px bg-[#555]" />
        <button className="w-[161px] text-center">Highest Analysis</button>
        <span className="h-6 w-px bg-[#555]" />
        <button className="w-[134px] text-center">DAX Analysis</button>
        <span className="h-6 w-px bg-[#555]" />
        <button aria-label="New sheet" className="ml-[52px]">
          <Icon w={14} h={14} color="#d0d0d0"><path d="M7 0v14M0 7h14" /></Icon>
        </button>
      </div>
      <div className="ml-auto flex h-10 w-[744px] items-center">
        <span className="mr-[18px] ml-1 flex w-[3px] flex-col gap-[3px]">
          <span className="size-[3px] bg-[#d0d0d0]" />
          <span className="size-[3px] bg-[#d0d0d0]" />
          <span className="size-[3px] bg-[#d0d0d0]" />
        </span>
        <div className="flex h-5 flex-1 items-center rounded-full bg-[#121212] px-1.5">
          <svg width="9" height="11" viewBox="0 0 9 11" fill="#9a9a9a"><path d="M9 0v11L0 5.500z" /></svg>
          <span className="mr-[26px] ml-1.5 h-[11px] flex-1 rounded-full bg-[#9a9a9a]" />
          <svg width="9" height="11" viewBox="0 0 9 11" fill="#9a9a9a"><path d="M0 0v11l9-5.500z" /></svg>
        </div>
      </div>
    </div>
  );
}

function StatusBar() {
  const [zoom, setZoom] = useState(75);
  return (
    <footer className="flex h-[26px] shrink-0 items-center bg-[#141414] pl-3.5 text-[12px]">
      <span>Ready</span>
      <button className="ml-[26px] flex items-center gap-1.5 font-bold">
        <Icon w={18} h={18} color="#fff" sw={1.300}>
          <circle cx="8" cy="2.800" r="2" />
          <path d="M1 3.500c0 2 4 2.500 4 3.500v3l-2.500 6.500L5 17.500l2.500-5.500M15 3.500c0 2-4 2.500-4 3.500v2M1 3.500c3 2.500 11 2.500 14 0M9.500 10l7.500 7.500M17 10l-7.500 7.500" />
        </Icon>
        Accessibility: Investigate
      </button>
      <div className="ml-auto flex h-full items-center">
        <button aria-label="Normal view" className="flex h-full w-[50px] items-center justify-center bg-[#262626]">
          <Icon w={17} h={17}><path d="M1 1h15v15H1zM1 6h15M1 11h15M6 1v15M11 1v15" /></Icon>
        </button>
        <button aria-label="Page layout" className="flex h-full w-[50px] items-center justify-center">
          <Icon w={17} h={17}><path d="M1 1h15v15H1zM4.500 3.500h8v10h-8zM6.500 6h4M6.500 8.500h4M6.500 11h4" /></Icon>
        </button>
        <button aria-label="Page break preview" className="flex h-full w-[50px] items-center justify-center">
          <Icon w={17} h={17}><path d="M1 1h15v15H1zM6 1v8.500M11 1v8.500M1 9.500h10" /></Icon>
        </button>
        <button aria-label="Zoom out" className="ml-1.5">
          <Icon w={10} h={10} color="#fff"><path d="M0 4.500h10" /></Icon>
        </button>
        <span className="relative ml-1.5 flex w-[124px] items-center">
          <input
            type="range"
            aria-label="Zoom"
            min={0}
            max={200}
            value={zoom}
            onChange={(e) => setZoom(Number(e.target.value))}
            className="h-px w-full appearance-none bg-[#9a9a9a] [&::-webkit-slider-thumb]:h-3.5 [&::-webkit-slider-thumb]:w-1.5 [&::-webkit-slider-thumb]:appearance-none [&::-webkit-slider-thumb]:bg-[#b8b8b8]"
          />
          <span className="pointer-events-none absolute left-1/2 h-1.5 w-px bg-[#9a9a9a]" />
        </span>
        <button aria-label="Zoom in" className="ml-1.5">
          <Icon w={10} h={10} color="#fff"><path d="M0 5h10M5 0v10" /></Icon>
        </button>
        <span className="mr-5 ml-4">{zoom}%</span>
      </div>
    </footer>
  );
}

function TaskApp({ label, active, children }: { label: string; active?: boolean; children: ReactNode }) {
  return (
    <button aria-label={label} className={`mx-[5px] flex h-full w-9 items-center justify-center border-y-[3px] border-t-transparent ${active ? "border-b-[#76b9ed]" : "border-b-transparent"}`}>
      {children}
    </button>
  );
}

function Taskbar() {
  return (
    <div className="flex h-[38px] shrink-0 items-center bg-[#101010]">
      <button aria-label="Start" className="flex w-[45px] pl-3">
        <svg width="20" height="20" viewBox="0 0 20 20" fill="#fff"><path d="M0 2.800 8.500 1.600v7.900H0zM9.500 1.400 20 0v9.500H9.500zM0 10.500h8.500v7.900L0 17.200zM9.500 10.500H20V20L9.500 18.600z" /></svg>
      </button>
      <label className="flex h-full w-[323px] items-center border border-[#5a5a5a] bg-[#3b3b3b] pl-3.5">
        <Icon w={21} h={21} color="#e8e8e8">
          <circle cx="13" cy="8" r="6.500" />
          <path d="M8.500 13 1 20.500" />
        </Icon>
        <input type="search" aria-label="Search Windows" placeholder="Search" className="ml-[15px] w-0 min-w-0 flex-1 bg-transparent text-[17px] outline-none placeholder:text-[#d2d2d2]" />
        <svg width="60" height="26" viewBox="0 0 60 26" className="mr-2" aria-hidden="true">
          <path d="M23 1c1.500 8 3 9.500 11 11-8 1.500-9.500 3-11 11-1.500-8-3-9.500-11-11 8-1.500 9.500-3 11-11z" fill="#ffc83d" />
          <path d="M44 10c.8 4 1.500 5 5 5.500-3.500.8-4.200 1.500-5 5.500-.8-4-1.500-4.800-5-5.500 3.500-.8 4.200-1.500 5-5.500z" fill="#f9d64a" />
          <path d="m5 15 2 3 3.500-.5-2 3 2 3-3.500-.500-2 3-1-3.500-3.500-1L6 19z" fill="#2aa0e6" />
          <circle cx="38" cy="2.500" r="2" fill="#e8743b" />
          <circle cx="55" cy="22" r="2" fill="#7ac943" />
        </svg>
      </label>
      <div className="ml-[3px] flex h-full">
        <TaskApp label="Snipping Tool">
          <svg width="22" height="20" viewBox="0 0 22 20">
            <ellipse cx="10" cy="7.500" rx="9" ry="6" fill="#f3f3f3" stroke="#c8324a" strokeWidth="1.500" transform="rotate(-20 10 7.500)" />
            <path d="M10 7 4 13M10 7l3 8" stroke="#b06070" />
            <circle cx="12" cy="16.500" r="2.300" fill="none" stroke="#2b8fd6" strokeWidth="1.500" />
            <circle cx="17.500" cy="14" r="2.300" fill="none" stroke="#2b8fd6" strokeWidth="1.500" />
          </svg>
        </TaskApp>
        <TaskApp label="Remote Desktop">
          <svg width="22" height="20" viewBox="0 0 22 20">
            <path d="m8 2 12 2-1 10-11-2z" fill="#3fa0e8" stroke="#9fd2f5" />
            <path d="m3 12 8 1.500-1 2.500-8-1zM8 16l11 1-1 2-10-1z" fill="#e4e4e4" />
          </svg>
        </TaskApp>
        <TaskApp label="WhatsApp"><FaWhatsapp size={22} color="#25d366" /></TaskApp>
        <TaskApp label="Brave">
          <span className="relative flex">
            <svg width="18" height="21" viewBox="0 0 18 21"><path d="M5 0h8l2 2h2l1 4-1 7-3 4.500L9 21l-5-3.500L1 13 0 6l1-4h2z" fill="#fb542b" /></svg>
            <span className="absolute inset-0 flex items-center justify-center"><SiBrave size={14} color="#fff" /></span>
          </span>
        </TaskApp>
        <TaskApp label="Firefox">
          <svg width="21" height="21" viewBox="0 0 21 21">
            <circle cx="10.500" cy="11" r="9.500" fill="#ff7a1a" />
            <path d="M13 0c1 3 6 4 7 9 1 6-3 11-8 11.500C18 17 18 10 14 7c0-3-2-4-1-7z" fill="#ffd23a" />
            <path d="M1 11c0-4 1-6 2-8 1 2 3 2 5 3 2 0 3 1 3 2-4 0-5 2-4 4 2 4 7 3 9 0 0 5-4 8-8 8-4-.5-7-4-7-9z" fill="#ff3d5a" />
            <circle cx="10.500" cy="11" r="4" fill="#7b3fe4" />
          </svg>
        </TaskApp>
        <TaskApp label="Chrome" active>
          <svg width="21" height="21" viewBox="0 0 20 20">
            <path d="M10 10 1.340 5A10 10 0 0 1 18.660 5z" fill="#e33b2e" />
            <path d="M10 10v10A10 10 0 0 1 1.340 5z" fill="#2da14c" />
            <path d="M10 5h8.660A10 10 0 0 1 20 10c0 5.500-4.500 10-10 10l4.330-7.500z" fill="#fbc116" />
            <circle cx="10" cy="10" r="4.800" fill="#fff" />
            <circle cx="10" cy="10" r="3.800" fill="#3b7ded" />
          </svg>
        </TaskApp>
        <TaskApp label="Excel" active><ExcelLogo size={21} /></TaskApp>
        <TaskApp label="File Explorer" active>
          <svg width="20" height="18" viewBox="0 0 20 18">
            <path d="M0 1h7l2 2.500h10V17H0z" fill="#e0a526" />
            <path d="M0 5h19v12H0z" fill="#ffd868" />
            <path d="M4 18v-7c0-1 .5-1.500 1.500-1.500h8c1 0 1.500.5 1.500 1.500v7h-3v-4H7v4z" fill="#3c93d6" />
          </svg>
        </TaskApp>
      </div>
      <div className="ml-auto flex h-full items-center">
        <svg width="24" height="26" viewBox="0 0 24 26" aria-hidden="true">
          <ellipse cx="12" cy="13" rx="11.500" ry="12.500" fill="#c4141f" />
          <path d="M5 8c4-1 5 1 7 2 2-1 3-3 7-2-3 1-5 2-6 5v7h-2v-7c-1-3-3-4-6-5z" fill="#2b1416" />
        </svg>
        <span className="ml-1.5 flex h-[25px] w-[61px] items-center justify-center border-2 border-white bg-[#1c9c4b] text-[16px]">100%</span>
        <span className="mr-[7px] h-3 w-0.5 bg-white" />
        <Icon w={12} h={20} color="#fff">
          <path d="M4 1v5M8 1v5M6 13v6" strokeWidth="2" />
          <path d="M1 6h10v4c0 3-2 4-3 4H4c-1 0-3-1-3-4z" fill="#fff" stroke="none" />
        </Icon>
        <button aria-label="Show hidden icons" className="ml-[13px]">
          <Icon w={16} h={10} color="#fff"><path d="M1 9 8 1.500 15 9" /></Icon>
        </button>
        <span className="ml-3 flex">
          <Icon w={20} h={16} color="#fff" sw={1.200}>
            <path d="M7 4.500h10.500v9H5V9" />
            <path d="M8 6h8v6H7z" fill="#fff" />
            <path d="M19 7v4M1 1v2.500h4V1M3 3.500V8h3" />
          </Icon>
        </span>
        <span className="ml-2.5 flex">
          <Icon w={20} h={18} color="#fff" sw={1.200}>
            <path d="M1 6.500h2.500L8 2v14l-4.500-4.500H1zM11 6.500c1.500 1.500 1.500 3.500 0 5M13.500 4c3 3 3 7 0 10M16 1.500c4 4 4 11 0 15" />
          </Icon>
        </span>
        <span className="ml-3 flex">
          <Icon w={16} h={17} color="#fff" sw={1.200}>
            <path d="M1 14C1 6 7 1 14 1M5 15c0-6 4-10 9.500-10M9 16c0-4 2.500-7 6-7" />
            <circle cx="13.500" cy="14.500" r="1.500" fill="#fff" />
          </Icon>
        </span>
        <span className="ml-[15px] text-[14px]">ENG</span>
        <span className="ml-5 text-[14px]">1:09 AM</span>
        <button aria-label="Notifications" className="ml-7">
          <Icon w={20} h={20} color="#fff"><path d="M1 1.500h18V16h-6l-3 3-3-3H1z" /></Icon>
        </button>
        <span className="mr-1.5 ml-[25px] h-full w-px bg-[#4a4a4a]" />
      </div>
    </div>
  );
}

function Watermark() {
  return (
    <div className="pointer-events-none absolute bottom-1 left-1/2 flex -translate-x-1/2 flex-col items-center text-[#b6b6b6]">
      <span dir="rtl" className="font-['DejaVu_Sans',sans-serif] text-[72px] leading-[78px] font-bold">نفذلي</span>
      <span className="font-['Lato',sans-serif] text-[37px] leading-[34px] font-bold">nafezly.com</span>
    </div>
  );
}

export default function App() {
  return (
    <div className="relative flex h-screen flex-col overflow-hidden bg-[#0a0a0a] font-['Open_Sans','Noto_Sans',sans-serif] text-[#f5f5f5]">
      <TitleBar />
      <MenuBar />
      <Ribbon />
      <FormulaBar />
      <Sheet />
      <SheetTabs />
      <StatusBar />
      <Taskbar />
      <Watermark />
    </div>
  );
}
